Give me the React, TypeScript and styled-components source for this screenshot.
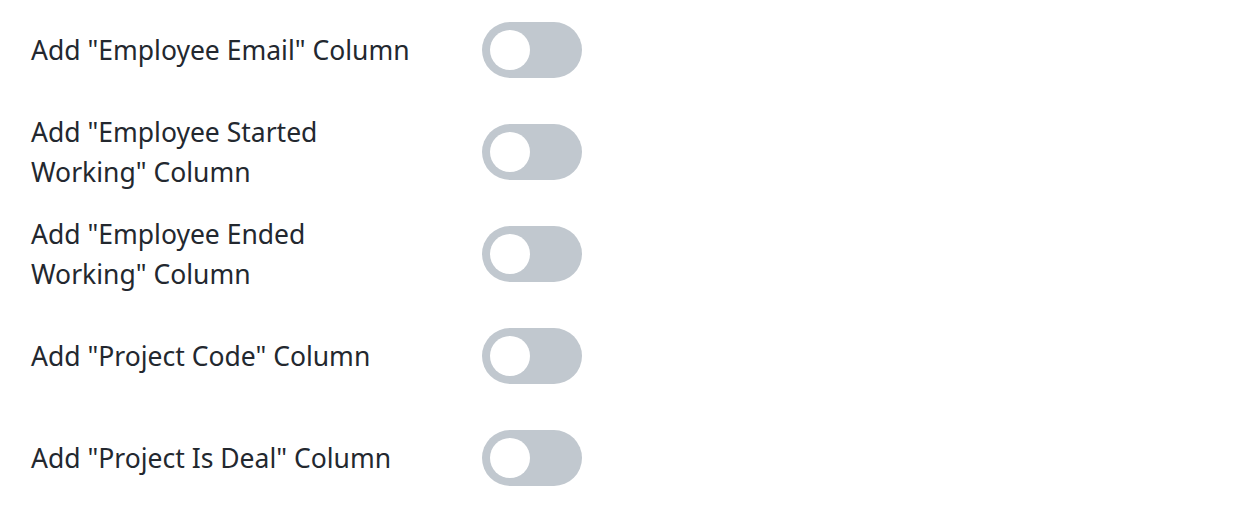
import React, { useState } from "react";
import styled, { createGlobalStyle } from "styled-components";

const GlobalStyle = createGlobalStyle`
  html, body { margin: 0; padding: 0; background: #ffffff; }
  body { font-family: "Noto Sans", "Open Sans", sans-serif; }
`;

const List = styled.div`
  display: flex;
  flex-direction: column;
  gap: 2px;
  padding: 0 0 0 31px;
`;

const Row = styled.label`
  display: grid;
  grid-template-columns: 390px 100px;
  column-gap: 61px;
  align-items: center;
  height: 100px;
  cursor: pointer;
`;

const Label = styled.span`
  font-size: 26.5px;
  line-height: 40px;
  color: #23282f;
  letter-spacing: 0;
`;

const Track = styled.button<{ $on: boolean }>`
  position: relative;
  width: 100px;
  height: 56px;
  border: none;
  padding: 0;
  border-radius: 28px;
  background: ${(p) => (p.$on ? "#3b82f6" : "#c1c8cf")};
  cursor: pointer;
  outline: none;
`;

const Knob = styled.span<{ $on: boolean }>`
  position: absolute;
  top: 8px;
  left: ${(p) => (p.$on ? "52px" : "8px")};
  width: 40px;
  height: 40px;
  border-radius: 50%;
  background: #ffffff;
  transition: left 0.15s ease;
`;

const items = [
  'Add "Employee Email" Column',
  'Add "Employee Started Working" Column',
  'Add "Employee Ended Working" Column',
  'Add "Project Code" Column',
  'Add "Project Is Deal" Column',
];

export default function App() {
  const [state, setState] = useState<boolean[]>(items.map(() => false));
  return (
    <>
      <GlobalStyle />
      <List>
        {items.map((t, i) => (
          <Row key={t}>
            <Label>{t}</Label>
            <Track
              type="button"
              role="switch"
              aria-checked={state[i]}
              $on={state[i]}
              onClick={() => setState((s) => s.map((v, j) => (j === i ? !v : v)))}
            >
              <Knob $on={state[i]} />
            </Track>
          </Row>
        ))}
      </List>
    </>
  );
}
